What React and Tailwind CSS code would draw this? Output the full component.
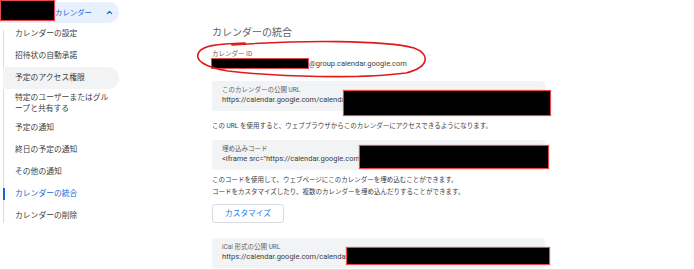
import { ChevronUp } from "lucide-react";

const items = [
  { label: "カレンダーの設定" },
  { label: "招待状の自動承諾" },
  { label: "予定のアクセス権限", hover: true },
  { label: ["特定のユーザーまたはグル", "ープと共有する"] },
  { label: "予定の通知" },
  { label: "終日の予定の通知" },
  { label: "その他の通知" },
  { label: "カレンダーの統合", active: true },
  { label: "カレンダーの削除" },
];

function Redact({ className }) {
  return (
    <div
      className={
        "absolute bg-black border border-[#e5484d] shadow-[0_0_1px_#f08080] " +
        className
      }
    />
  );
}

function UrlBox({ label, value, redact }) {
  return (
    <div className="relative w-[333px] h-[30px] shrink-0 rounded-[3px] bg-[#f1f3f4] pl-[10px] pt-[5px]">
      <div className="text-[6.5px] leading-[8px] text-[#5f6368]">{label}</div>
      <div className="text-[7.5px] leading-[11px] text-[#3c4043] whitespace-nowrap overflow-hidden">
        {value}
      </div>
      <Redact className={redact} />
    </div>
  );
}

export default function App() {
  return (
    <div className="w-[694px] h-[270px] overflow-hidden bg-white border-b border-[#dadce0] flex font-['Roboto','Noto_Sans_CJK_JP',sans-serif]">
      {/* Sidebar */}
      <aside className="relative w-[120px] shrink-0">
        <div className="mt-[2px] h-[21px] w-[119px] rounded-r-full bg-[#e8f0fe] flex items-center justify-between pl-[55px] pr-[5px]">
          <span className="text-[7.4px] text-[#1967d2]">カレンダー</span>
          <ChevronUp className="w-[9px] h-[9px] text-[#1967d2]" strokeWidth={3} />
        </div>
        <Redact className="left-0 top-0 w-[55px] h-[21px]" />

        <ul className="relative ml-[3px] pb-[1px] before:absolute before:left-0 before:top-[7px] before:bottom-[5px] before:w-px before:bg-[#dadce0]">
          {items.map((it, i) => (
            <li
              key={i}
              className={
                "relative w-[116px] flex flex-col justify-center pl-[12px] text-[7.8px] " +
                (Array.isArray(it.label) ? "h-[28px] leading-[11px] " : "h-[22px] ") +
                (it.hover ? "bg-[#f1f3f4] rounded-r-full " : "") +
                (it.active ? "text-[#1967d2]" : "text-[#3c4043]")
              }
            >
              {it.active && (
                <span className="absolute left-0 top-[5px] w-[2px] h-[12px] bg-[#1967d2]" />
              )}
              {Array.isArray(it.label)
                ? it.label.map((l) => <span key={l}>{l}</span>)
                : it.label}
            </li>
          ))}
        </ul>
      </aside>

      {/* Main */}
      <main className="relative flex-1 flex flex-col pl-[92px] pt-[26px]">
        <h1 className="text-[10px] leading-[14px] text-[#5f6368] font-normal">
          カレンダーの統合
        </h1>

        <div className="mt-[10px] text-[6.5px] leading-[8px] text-[#5f6368]">
          カレンダー ID
        </div>
        <div className="flex items-center h-[11px] text-[7.5px] text-[#3c4043]">
          <span className="inline-block w-[98px] h-[11px] -ml-px bg-black border border-[#e5484d]" />
          <span>@group.calendar.google.com</span>
        </div>

        <div className="mt-[12px]">
          <UrlBox
            label="このカレンダーの公開 URL"
            value="https://calendar.google.com/calendar/embed?src=xxxxxxxxxxxxxxxx"
            redact="left-[131px] top-[9px] w-[208px] h-[26px]"
          />
        </div>
        <p className="mt-[10px] text-[6.5px] leading-[10px] text-[#3c4043]">
          この URL を使用すると、ウェブブラウザからこのカレンダーにアクセスできるようになります。
        </p>

        <div className="mt-[9px]">
          <UrlBox
            label="埋め込みコード"
            value={'<iframe src="https://calendar.google.com/calendar/embed?src=xxxxxxxx'}
            redact="left-[147px] top-[5px] w-[190px] h-[24px]"
          />
        </div>
        <p className="mt-[4px] text-[6.5px] leading-[12px] text-[#3c4043]">
          このコードを使用して、ウェブページにこのカレンダーを埋め込むことができます。
          <br />
          コードをカスタマイズしたり、複数のカレンダーを埋め込んだりすることができます。
        </p>

        <button className="mt-[6px] w-[72px] h-[19px] rounded-[3px] border border-[#dadce0] bg-white text-[7.7px] text-[#1a73e8]">
          カスタマイズ
        </button>

        <div className="mt-[15px]">
          <UrlBox
            label="iCal 形式の公開 URL"
            value="https://calendar.google.com/calendar/ical/xxxxxxxxxxxxxxxx"
            redact="left-[134px] top-[9px] w-[204px] h-[18px]"
          />
        </div>

        {/* hand-drawn highlight */}
        <svg
          className="absolute left-0 top-0 pointer-events-none"
          width="574"
          height="270"
          viewBox="120 0 574 270"
        >
          <path
            d="M232 45 C300 40 385 40 414 48 C430 54 430 67 406 73 C360 79 280 77 228 71 C204 67 194 60 199 52 C203 46 214 44 245 43"
            fill="none"
            stroke="#e01b1b"
            strokeWidth="1.6"
            strokeLinecap="round"
          />
        </svg>
      </main>
    </div>
  );
}
